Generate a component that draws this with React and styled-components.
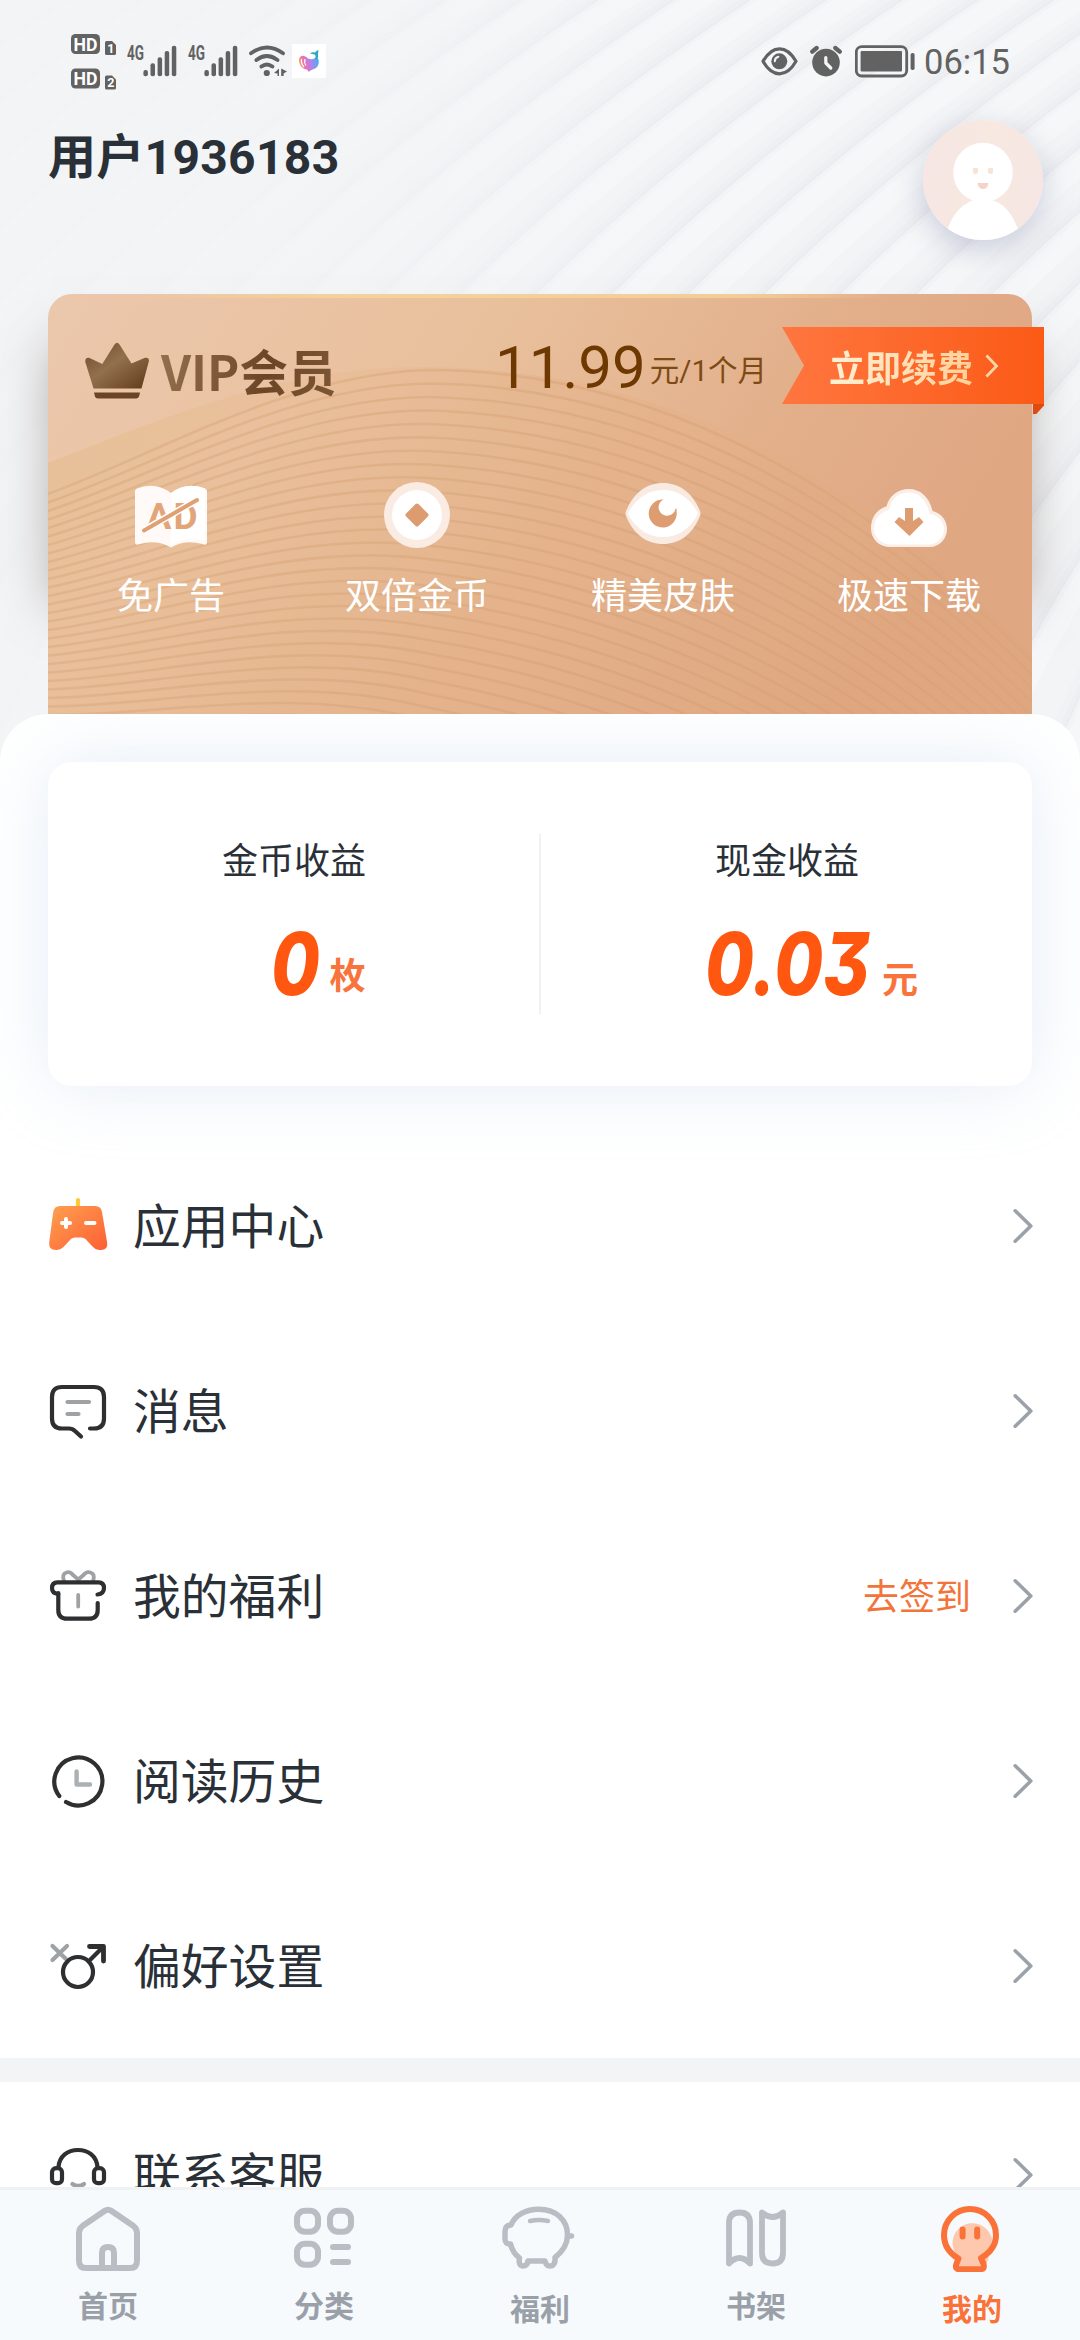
import React from 'react';
import styled, { createGlobalStyle, css } from 'styled-components';

const GlobalStyle = createGlobalStyle`
  * {
    box-sizing: border-box;
  }

  body {
    margin: 0;
    background: #fff;
    font-family: Roboto, 'Noto Sans CJK SC', sans-serif;
    color: #2a3037;
  }

  svg {
    display: block;
    flex: none;
  }
`;

const Page = styled.div`
  position: relative;
  display: flex;
  flex-direction: column;
  width: 1080px;
  height: 2340px;
  overflow: hidden;
  background: #f3f4f6;
`;

const Backdrop = styled.svg`
  position: absolute;
  top: 0;
  left: 0;
`;

/* ---------- status bar ---------- */

const StatusBar = styled.div`
  position: relative;
  display: flex;
  justify-content: space-between;
  height: 82px;
  padding: 34px 70px 0 71px;
`;

const StatusGroup = styled.div`
  display: flex;
  gap: ${({ $gap }) => $gap}px;
`;

const Clock = styled.span`
  margin-left: -3px;
  font-size: 34.5px;
  line-height: 57px;
  color: #626262;
`;

/* ---------- header ---------- */

const Header = styled.header`
  position: relative;
  display: flex;
  justify-content: space-between;
  height: 212px;
  padding: 38px 37px 0 48px;
`;

const UserName = styled.h1`
  margin: 0;
  font-size: 48px;
  line-height: 76px;
  letter-spacing: 0.3px;
  font-weight: 700;
`;

const Avatar = styled.div`
  width: 120px;
  height: 120px;
  border-radius: 50%;
  overflow: hidden;
  background: linear-gradient(100deg, #f7e6e4, #f7e8e0 50%, #f6e6e4);
  box-shadow: 0 10px 30px rgba(120, 130, 165, 0.35);
`;

/* ---------- vip card ---------- */

const VipCard = styled.section`
  position: relative;
  height: 420px;
  margin: 0 48px;

  &:before {
    content: '';
    position: absolute;
    inset: 60px 14px 120px;
    box-shadow: 0 0 46px 10px rgba(110, 100, 95, 0.5);
  }
`;

const VipArt = styled.svg`
  position: absolute;
  top: 0;
  left: 0;
  border-radius: 24px 24px 0 0;
`;

const VipHead = styled.div`
  position: relative;
  display: flex;
  align-items: center;
  height: 110px;
  padding: 33px 0 0 37px;

  > svg {
    margin-top: 11px;
  }
`;

const VipTitle = styled.h2`
  margin: 9px 0 0 12px;
  font-family: 'Noto Sans CJK SC', sans-serif;
  font-size: 48.5px;
  line-height: 60px;
  font-weight: 700;
  background: linear-gradient(100deg, #94704e, #6c4526 60%, #7d5735);
  background-clip: text;
  color: transparent;
`;

const Price = styled.div`
  display: flex;
  align-items: baseline;
  margin: 4px 15px 0 auto;
  font-size: 60px;
  line-height: 77px;
  color: #6e3900;

  small {
    margin-left: 4px;
    font-size: 29.5px;
    line-height: 1;
    color: #7d4a14;
    transform: translateY(-7px);
  }
`;

const Ribbon = styled.div`
  position: relative;
  display: flex;
  align-items: center;
  gap: 12px;
  width: 262px;
  height: 77px;
  margin-right: -12px;
  padding-left: 47px;
  background: linear-gradient(90deg, #ff763f, #fb5a16);
  clip-path: polygon(0 0, 100% 0, 100% 100%, 0 100%, 22px 50%);
  font-size: 36px;
  font-weight: 700;

  span {
    background: linear-gradient(90deg, #fff0d4, #ffd09a);
    background-clip: text;
    color: transparent;
  }
`;

const RibbonFold = styled.div`
  position: absolute;
  top: 110px;
  right: -12px;
  width: 11px;
  height: 10px;
  background: #e2490c;
  clip-path: polygon(0 0, 100% 0, 100% 15%, 30% 100%, 0 100%);
`;

const Features = styled.div`
  position: relative;
  display: grid;
  grid-template-columns: repeat(4, 1fr);
  padding-top: 78px;
`;

const Feature = styled.div`
  display: flex;
  flex-direction: column;
  align-items: center;
  gap: 24px;
  font-size: 36px;
  line-height: 50px;
  color: #fff;
`;

/* ---------- white sheet ---------- */

const Sheet = styled.main`
  position: relative;
  height: 1473px;
  padding-top: 48px;
  overflow: hidden;
  border-radius: 48px 48px 0 0;
  background: #fff;
`;

const Earnings = styled.section`
  display: flex;
  align-items: center;
  height: 324px;
  margin: 0 48px 47px;
  border-radius: 24px;
  background: #fff;
  box-shadow: 0 0 70px rgba(170, 195, 225, 0.3);
`;

const Divider = styled.div`
  width: 2px;
  height: 180px;
  background: #f0f1f3;
`;

const Earning = styled.div`
  flex: 1;
  height: 180px;
  padding: 2px 0 0 1px;
  text-align: center;
  font-size: 36px;
  line-height: 52px;
`;

const Amount = styled.div`
  display: flex;
  justify-content: center;
  align-items: baseline;
  padding-left: 49px;
  margin-top: 24px;
`;

const Digits = styled.span`
  width: ${({ $width }) => $width}px;
  text-align: left;
  font-family: Inter, Roboto, sans-serif;
  font-feature-settings: 'cv09' 1;
  font-size: 86px;
  font-style: italic;
  font-weight: 800;
  line-height: 104px;
  color: #ff5610;
  white-space: nowrap;
  transform: scaleX(0.82);
  transform-origin: left;
`;

const Unit = styled.span`
  font-weight: 700;
  color: #f9743c;
  transform: translateY(${({ $lift }) => -$lift}px);
`;

const Row = styled.div`
  display: flex;
  align-items: center;
  height: 185px;
  padding: 0 47px 0 48px;
`;

const RowLabel = styled.span`
  flex: 1;
  margin: 4px 0 0 25px;
  font-size: 47.8px;
  line-height: 70px;
`;

const RowHint = styled.span`
  margin: 4px 42px 0 0;
  font-size: 36px;
  line-height: 52px;
  color: #f3743a;
`;

const Separator = styled.div`
  height: 24px;
  background: #f3f4f6;
`;

/* ---------- tab bar ---------- */

const TabBar = styled.nav`
  position: relative;
  display: grid;
  grid-template-columns: repeat(5, 1fr);
  height: 153px;
  padding-top: 16px;
  border-top: 3px solid #eff1f3;
  background: #f6fafd;
`;

const Tab = styled.div`
  display: flex;
  flex-direction: column;
  align-items: center;
  font-size: 30px;
  line-height: 40px;
  font-weight: 700;
  color: #9aa0a8;

  span {
    margin-top: ${({ $low }) => ($low ? 18 : 15)}px;
  }

  ${({ $active }) =>
    $active &&
    css`
      color: #fa7238;
    `}
`;

/* ---------- drawings ---------- */

const waves = Array.from({ length: 26 }, (_, i) => i);

const Waves = () => (
  <Backdrop width="1080" height="780" viewBox="0 0 1080 780" fill="none">
    <defs>
      <linearGradient id="fade" x1="0" x2="1">
        <stop offset="0.2" stopColor="#f3f4f6" stopOpacity="0.85" />
        <stop offset="0.4" stopColor="#f3f4f6" stopOpacity="0.6" />
        <stop offset="0.65" stopColor="#f3f4f6" stopOpacity="0" />
      </linearGradient>
    </defs>
    {waves.map(i => {
      const x = -780 + i * 76;
      const d = `M${x} 1100C${x + 40} 700 ${x + 260} 330 ${x + 800} -20`;
      return (
        <g key={i}>
          <path d={d} stroke="#f8f9f9" strokeOpacity="0.5" strokeWidth="20" transform="translate(12 9)" />
          <path d={d} stroke="#e6e9ec" strokeOpacity="0.15" strokeWidth="13" transform="translate(-5 -4)" />
          <path d={d} stroke="#e4e7ea" strokeOpacity="0.2" strokeWidth="6" transform="translate(-2 -2)" />
          <path d={d} stroke="#e1e4e8" strokeOpacity="0.3" strokeWidth="2" />
        </g>
      );
    })}
    <rect width="1080" height="780" fill="url(#fade)" />
  </Backdrop>
);

const ridges = Array.from({ length: 32 }, (_, i) => i);

const VipBackground = () => (
  <VipArt width="984" height="420" viewBox="0 0 984 420" fill="none">
    <defs>
      <linearGradient id="skin" x1="0" y1="0" x2="1" y2="0.25">
        <stop offset="0" stopColor="#ebc7ac" />
        <stop offset="0.45" stopColor="#e9c09c" />
        <stop offset="0.75" stopColor="#e3b08c" />
        <stop offset="1" stopColor="#e0a783" />
      </linearGradient>
      <linearGradient id="dune" x1="0" y1="0" x2="1" y2="0.3">
        <stop offset="0" stopColor="#e6bf97" />
        <stop offset="0.25" stopColor="#e9c09b" />
        <stop offset="0.6" stopColor="#e4b38c" />
        <stop offset="1" stopColor="#dfa780" />
      </linearGradient>
      <linearGradient id="edge">
        <stop offset="0.08" stopColor="#f5d29c" stopOpacity="0" />
        <stop offset="0.3" stopColor="#f5d29c" />
        <stop offset="0.7" stopColor="#f3cd98" />
        <stop offset="0.85" stopColor="#f3cd98" stopOpacity="0" />
      </linearGradient>
      <linearGradient id="ridge" gradientUnits="userSpaceOnUse" x1="0" x2="984">
        <stop offset="0" stopColor="#d3a070" stopOpacity="0.36" />
        <stop offset="0.6" stopColor="#cf9668" stopOpacity="0.3" />
        <stop offset="1" stopColor="#cf9164" stopOpacity="0.12" />
      </linearGradient>
    </defs>
    <rect width="984" height="420" fill="url(#skin)" />
    <path d="M0 169C130 118 240 73 372 73C580 73 780 150 984 359V420H0Z" fill="url(#dune)" />
    {ridges.map(i => {
      const left = 200 + i * 8.5;
      const mid = 76 + i * 13.5;
      const tilt = i * 1.6;
      return (
        <path
          key={i}
          d={`M0 ${left}C110 ${left - 40 + tilt} 240 ${mid + 4 - tilt} 380 ${mid}C580 ${mid + tilt} 790 ${mid + 92 + tilt} 984 ${mid + 292}`}
          stroke="url(#ridge)"
          strokeWidth="2.6"
        />
      );
    })}
    <rect width="984" height="4" fill="url(#edge)" />
  </VipArt>
);

const HdIcon = () => (
  <svg width="46" height="56" viewBox="0 0 46 56" fontFamily="Roboto" fontWeight="700" fill="#fff">
    {[0, 34.5].map((y, i) => (
      <g key={y} transform={`translate(0 ${y})`}>
        <rect width="29" height="20" rx="4.5" fill="#626262" />
        <text x="2.5" y="16.5" fontSize="18" textLength="24" lengthAdjust="spacingAndGlyphs">
          HD
        </text>
        <path d="M34 8.5Q34 7 35.5 7H41L45 11V19.5Q45 21 43.5 21H35.5Q34 21 34 19.5Z" fill="#626262" />
        <text x="36.3" y="18.8" fontSize="12.5">
          {i + 1}
        </text>
      </g>
    ))}
  </svg>
);

const SignalIcon = () => (
  <svg width="51" height="56" viewBox="0 0 51 56" fill="#626262">
    <text y="26" fontFamily="Roboto" fontWeight="700" fontSize="19.5" textLength="17" lengthAdjust="spacingAndGlyphs">
      4G
    </text>
    {[36, 29.3, 23.3, 17, 11.7].map((y, i) => (
      <rect key={y} x={16.4 + i * 7.1} y={y} width="4.5" height={42.3 - y} rx="2" />
    ))}
  </svg>
);

const WifiIcon = () => (
  <svg width="33" height="56" viewBox="0 0 33 56" overflow="visible" fill="none" stroke="#626262" strokeWidth="3.8" strokeLinecap="round">
    <path d="M2 19.3Q17.8 7.6 34 19.3M7.4 26Q17.8 18 28.5 26M12.4 32.6Q17.8 28.4 23.4 32.6" />
    <circle cx="17.8" cy="39" r="3.1" fill="#626262" stroke="none" />
    <path d="M30 34.5V42H28.5V39.6L25 39ZM32.2 34.5L38 37.6L34.6 39.6V42H32.2Z" fill="#626262" stroke="none" />
  </svg>
);

const WhaleIcon = () => (
  <svg width="34" height="56" viewBox="0 0 34 56" fill="none">
    <defs>
      <linearGradient id="whale" x1="0" y1="0.6" x2="1" y2="0.4">
        <stop offset="0" stopColor="#f3b04e" />
        <stop offset="0.3" stopColor="#ea6fbd" />
        <stop offset="0.65" stopColor="#a588ee" />
        <stop offset="1" stopColor="#45aef0" />
      </linearGradient>
    </defs>
    <rect y="10" width="34" height="34" fill="#fff" />
    <path d="M7 26C7 21 12 20 16 24.5C20 26 23 25 24 22.5C27 24 28 29 25 33C22 36 19 35 17 38L15 35.5C10 35 7 31 7 26Z" fill="url(#whale)" />
    <path d="M23.5 24.5Q24 21 22.5 20.5L18 19.5Q20 17.8 23 18.5Q24 16.5 26.5 16L26 20Q27 23 24.5 26Z" fill="#2ba6c4" />
    <path d="M9.5 25Q9 30 12 33M13 25Q12 29 14 31.5" stroke="#fff" strokeWidth="1.1" />
  </svg>
);

const EyeIcon = () => (
  <svg width="37" height="56" viewBox="0 0 37 56" fill="none">
    <path
      d="M2 27.3C7 18.5 13 14.8 18.5 14.8S30 18.5 35 27.3C30 36.1 24 39.8 18.5 39.8S7 36.1 2 27.3Z"
      stroke="#626262"
      strokeWidth="3.2"
      strokeLinejoin="round"
    />
    <circle cx="18.3" cy="27.3" r="8" fill="#626262" />
    <path d="M13.8 27.3Q14 23.5 17.4 22.8" stroke="#f3f4f6" strokeWidth="2" strokeLinecap="round" />
  </svg>
);

const AlarmIcon = () => (
  <svg width="33" height="56" viewBox="0 0 33 56" fill="none" strokeLinecap="round">
    <circle cx="16" cy="28.6" r="13.8" fill="#626262" />
    <path d="M2.3 17.6L6.6 14M25.4 14L29.7 17.6" stroke="#626262" strokeWidth="4.4" />
    <path d="M15.8 23.5V29L20.8 34" stroke="#f5f6f7" strokeWidth="3.2" strokeLinejoin="round" />
  </svg>
);

const BatteryIcon = () => (
  <svg width="60" height="56" viewBox="0 0 60 56" fill="none">
    <rect x="1.3" y="12.6" width="50.4" height="29.4" rx="5.5" stroke="#626262" strokeWidth="2.8" />
    <rect x="5.6" y="17" width="41.4" height="20.4" rx="1" fill="#626262" />
    <rect x="55.6" y="19" width="4" height="17" rx="1.8" fill="#626262" />
  </svg>
);

const AvatarFace = () => (
  <svg width="120" height="120" viewBox="0 0 120 120">
    <circle cx="60" cy="52.5" r="29.8" fill="#fff" />
    <path d="M23 120V113C30 92 42 79 60 79S90 92 96 113V120Z" fill="#fff" />
    <path d="M50 48h5v3a2.5 3 0 0 1-5 0ZM65 48h5v3a2.5 3 0 0 1-5 0Z" fill="#f8e3d6" />
    <path d="M54.5 63H65.5Q64.5 69 60 69T54.5 63Z" fill="#f6d3c8" />
  </svg>
);

const Crown = () => (
  <svg width="64" height="58" viewBox="0 0 64 58">
    <defs>
      <linearGradient id="crown" x1="0" y1="0" x2="1" y2="1">
        <stop offset="0" stopColor="#6d4929" />
        <stop offset="0.45" stopColor="#93704d" />
        <stop offset="1" stopColor="#5f3a18" />
      </linearGradient>
    </defs>
    <path
      d="M29.5 2.5Q32 -1 34.5 2.5L46.5 21.5L60 15.8Q64.5 15 63.8 19.5L56.5 46.5H8.5L0.3 20Q0 15 4 15.8L17.3 22Z"
      fill="url(#crown)"
    />
    <path d="M9 50.5H55L54 54.5Q53.4 56.5 51 56.5H13Q10.5 56.5 10 54.5Z" fill="#6a4424" />
  </svg>
);

const BookFeature = () => (
  <svg width="76" height="66" viewBox="0 0 76 66" fill="none">
    <path
      d="M2 9Q2 7.5 4 6.5Q22 -0.5 38 11Q54 -0.5 72 6.5Q74 7.5 74 9V60Q74 64 69.5 62Q52 57 38 65.5Q24 57 6.5 62Q2 64 2 60Z"
      fill="#fffaf7"
    />
    <path d="M38 11Q54 -0.5 72 6.5V58Q52 53 38 64Z" fill="#fff" />
    <text x="13.5" y="46.5" fontFamily="Roboto" fontWeight="700" fontSize="37" fill="#e2a57a" textLength="51">
      AD
    </text>
    <path d="M10.5 48.5L64 18" stroke="#fff" strokeWidth="7" />
    <path d="M11 48.5L64 18" stroke="#dfa073" strokeWidth="4" strokeLinecap="round" />
  </svg>
);

const CoinFeature = () => (
  <svg width="76" height="66" viewBox="0 0 76 66">
    <circle cx="38" cy="33" r="33" fill="#faece2" />
    <circle cx="38" cy="33" r="25" fill="#fff" />
    <rect x="29.3" y="24.3" width="17.4" height="17.4" rx="2" fill="#dd9c6f" transform="rotate(45 38 33)" />
  </svg>
);

const EyeFeature = () => (
  <svg width="76" height="66" viewBox="0 0 76 66">
    <path
      d="M1 34Q0 31.5 1 29C9 10 22 1 38 1S67 10 75 29Q76 31.5 75 34C67 53 54 62 38 62S9 53 1 34Z"
      fill="#f9ebe2"
    />
    <path
      d="M3.5 33Q3 31.5 3.5 30C12 15 24 8 38 8S64 15 72.5 30Q73 31.5 72.5 33C64 48 52 55 38 55S12 48 3.5 33Z"
      fill="#fff"
    />
    <path d="M38.5 17.5A14 14 0 1 0 51.5 29Q52 26 50.5 26.5A8.5 8.5 0 1 1 38.5 17.5Z" fill="#dd9d70" />
  </svg>
);

const CloudFeature = () => (
  <svg width="76" height="66" viewBox="0 0 76 66">
    <path
      d="M19 65C8 65 0 57 0 46.5C0 35.5 6 27 15.5 24.5C18 14 27 7 38 7S58.5 15 61.5 29C70 31 76 38 76 47C76 57 68.5 65 58.5 65Z"
      fill="#fbeee6"
    />
    <path
      d="M20 62.5C10.5 62.5 3 55.5 3 46.5C3 37 9 30 18 28C20 16.5 28 10.5 38 10.5S56 18 58.5 32C67 33 73 39.5 73 47C73 56 66.5 62.5 57.5 62.5Z"
      fill="#fff"
    />
    <path d="M34 26H42V39L48 35L52.5 40L38.5 54L23.5 40L28 35L34 39Z" fill="#dd9d70" />
  </svg>
);

const Chevron = ({ color = '#9aa1a9' }) => (
  <svg width="20" height="36" viewBox="0 0 20 36" fill="none" stroke={color} strokeWidth="3.6" strokeLinecap="round" strokeLinejoin="round">
    <path d="M2.2 2.8L17.8 18L2.2 33.2" />
  </svg>
);

const RowIcon = ({ children }) => (
  <svg width="60" height="60" viewBox="0 0 60 60" fill="none" stroke="#2d2f31" strokeWidth="4.2" strokeLinecap="round" strokeLinejoin="round">
    {children}
  </svg>
);

const GRAY = '#9fa2a5';

const GameIcon = () => (
  <RowIcon>
    <defs>
      <linearGradient id="pad" x1="0" y1="0" x2="1" y2="1">
        <stop offset="0" stopColor="#ffa050" />
        <stop offset="1" stopColor="#fc5f34" />
      </linearGradient>
    </defs>
    <path d="M30 4.2V14" stroke="#fdca35" />
    <path
      d="M12 10H47Q53 10 54 16L59.2 47Q60 54 53 54H51Q47.5 54 45 51L37.5 43Q36 41.5 33.5 41.5H27Q24.5 41.5 23 43L15.5 51Q12.5 54 9 54H8Q0.3 54 1.2 46.5L5.2 16Q6.2 10 12 10Z"
      fill="url(#pad)"
      stroke="none"
    />
    <path d="M14 27H22M18 23V31M38 27H46.5" stroke="#fff" strokeWidth="4" />
  </RowIcon>
);

const MessageIcon = () => (
  <RowIcon>
    <path d="M42 47.5H46Q56 47.5 56 37.5V16Q56 6 46 6H14Q4 6 4 16V37.5Q4 47.5 14 47.5H21Q24.5 47.5 27 50L33 55.5" />
    <path d="M19.5 21H41M19.5 33H30.5" stroke={GRAY} />
  </RowIcon>
);

const GiftIcon = () => (
  <RowIcon>
    <path d="M16 15Q13.5 8 18.5 6.5Q22 5 25 9L30.3 13.5L35.5 9Q38.5 5 42.5 6.5Q47.5 8 45 15M30.2 29V40.5" stroke={GRAY} strokeWidth="3.8" />
    <path d="M10.3 27V44Q10.3 52.7 19 52.7H41Q49.7 52.7 49.7 44V37" />
    <path d="M10.3 28Q4 27.5 4 22T9.5 16.3H50.5Q56 16.3 56 22T49.5 28.5" />
  </RowIcon>
);

const HistoryIcon = () => (
  <RowIcon>
    <path d="M11.3 45A24 24 0 1 1 18 51" />
    <path d="M28.6 20.5V33.5H42" stroke="#abb0b3" strokeWidth="4.4" />
  </RowIcon>
);

const GenderIcon = () => (
  <RowIcon>
    <path d="M4.5 10L19 24M4.5 24L19 10" stroke={GRAY} />
    <circle cx="30" cy="36" r="15" />
    <path d="M41 25L54 12" />
    <path d="M41.5 10.5H55.5V25" strokeWidth="4.8" />
  </RowIcon>
);

const HeadsetIcon = () => (
  <RowIcon>
    <path d="M10.5 22C11.5 11 19.5 5 30 5S48.5 11 49.5 22" />
    <rect x="4" y="23.2" width="10" height="15" rx="4" />
    <rect x="46" y="23.2" width="10" height="15" rx="4" />
    <path d="M24.5 39Q30.3 43 36 39" stroke={GRAY} />
  </RowIcon>
);

const TabIcon = ({ children, color = '#b9bec4', width = 6 }) => (
  <svg width="76" height="66" viewBox="-2 0 76 66" fill="none" stroke={color} strokeWidth={width} strokeLinecap="round" strokeLinejoin="round">
    {children}
  </svg>
);

const HomeTab = () => (
  <TabIcon>
    <path d="M32.8 4.8Q36 2.6 39.2 4.8L61.5 20Q65 22.8 65 27V55Q65 62 58 62H14Q7 62 7 55V27Q7 22.8 10.5 20Z" />
    <path d="M30 61V47Q30 41 36 41T42 47V61" />
  </TabIcon>
);

const CategoryTab = () => (
  <TabIcon>
    <rect x="9" y="4.8" width="21" height="21" rx="8" />
    <rect x="42" y="4.8" width="21" height="21" rx="8" />
    <rect x="9" y="37.8" width="21" height="21" rx="8" />
    <path d="M45 41H60M45 56H60" />
  </TabIcon>
);

const PigTab = () => (
  <TabIcon width={5.5}>
    <path d="M7 19C11 9 22 3.2 35 3.2C52 3.2 63.5 14 63.5 29C63.5 39 58 46 51 51.5C51.5 57 49.5 60 46 60S42 58 41 55H24C23.5 58 22 60 19 60S14.5 57 15.5 52C11 49 8 44 6.5 38C3 38.5 1 36.5 1 33V25C1 21.5 3 19 7 19Z" />
    <path d="M65 30H67.5" />
    <path d="M26 15Q35 13 44 15" strokeWidth="4.5" />
  </TabIcon>
);

const ShelfTab = () => (
  <TabIcon width={5.8}>
    <path d="M9 57.5V17Q9 6.5 19.5 6.5T30 17V57.5Q19.5 46.5 9 57.5Z" />
    <path d="M42 6.5V47Q42 57.5 52.5 57.5T63 47V6.5Q52.5 15.5 42 6.5Z" />
  </TabIcon>
);

const MineTab = () => (
  <TabIcon color="#fa7238">
    <path d="M16.5 36A20 20 0 0 1 56 33Q54 48 51 57L46 62H21L23 51Q16.5 46 16.5 36Z" fill="#fdc8ae" stroke="none" />
    <path d="M22.5 52.5C13 47 8 39.5 8 29A26 26 0 0 1 60 29C60 39 54.5 46.5 45 52L47.5 58Q49 63.2 44.5 63.2H23Q19 63.2 20.2 58.5Z" />
    <path d="M26.6 23.5V30.5M41.2 23.5V30.5" />
  </TabIcon>
);

const features = [
  { label: '免广告', Icon: BookFeature },
  { label: '双倍金币', Icon: CoinFeature },
  { label: '精美皮肤', Icon: EyeFeature },
  { label: '极速下载', Icon: CloudFeature },
];

const rows = [
  { label: '应用中心', Icon: GameIcon },
  { label: '消息', Icon: MessageIcon },
  { label: '我的福利', Icon: GiftIcon, hint: '去签到' },
  { label: '阅读历史', Icon: HistoryIcon },
  { label: '偏好设置', Icon: GenderIcon },
];

const tabs = [
  { label: '首页', Icon: HomeTab },
  { label: '分类', Icon: CategoryTab },
  { label: '福利', Icon: PigTab, low: true },
  { label: '书架', Icon: ShelfTab },
  { label: '我的', Icon: MineTab, low: true, active: true },
];

const MenuRow = ({ label, Icon, hint }) => (
  <Row>
    <Icon />
    <RowLabel>{label}</RowLabel>
    {hint && <RowHint>{hint}</RowHint>}
    <Chevron />
  </Row>
);

const App = () => (
  <>
    <GlobalStyle />
    <Page>
      <Waves />

      <StatusBar>
        <StatusGroup $gap={10}>
          <HdIcon />
          <SignalIcon />
          <SignalIcon />
          <WifiIcon />
          <WhaleIcon />
        </StatusGroup>
        <StatusGroup $gap={12}>
          <EyeIcon />
          <AlarmIcon />
          <BatteryIcon />
          <Clock>06:15</Clock>
        </StatusGroup>
      </StatusBar>

      <Header>
        <UserName>用户1936183</UserName>
        <Avatar>
          <AvatarFace />
        </Avatar>
      </Header>

      <VipCard>
        <VipBackground />
        <VipHead>
          <Crown />
          <VipTitle>VIP会员</VipTitle>
          <Price>
            11.99<small>元/1个月</small>
          </Price>
          <Ribbon>
            <span>立即续费</span>
            <svg width="14" height="24" viewBox="0 0 14 24" fill="none" stroke="#ffd7a6" strokeWidth="2.8">
              <path d="M1.5 1.5L11.5 12L1.5 22.5" />
            </svg>
          </Ribbon>
          <RibbonFold />
        </VipHead>
        <Features>
          {features.map(({ label, Icon }) => (
            <Feature key={label}>
              <Icon />
              {label}
            </Feature>
          ))}
        </Features>
      </VipCard>

      <Sheet>
        <Earnings>
          <Earning>
            金币收益
            <Amount>
              <Digits $width={58}>0</Digits>
              <Unit $lift={6}>枚</Unit>
            </Amount>
          </Earning>
          <Divider />
          <Earning>
            现金收益
            <Amount>
              <Digits $width={177}>0.03</Digits>
              <Unit $lift={2}>元</Unit>
            </Amount>
          </Earning>
        </Earnings>

        {rows.map(row => (
          <MenuRow key={row.label} {...row} />
        ))}
        <Separator />
        <MenuRow label="联系客服" Icon={HeadsetIcon} />
      </Sheet>

      <TabBar>
        {tabs.map(({ label, Icon, low, active }) => (
          <Tab key={label} $low={low} $active={active}>
            <Icon />
            <span>{label}</span>
          </Tab>
        ))}
      </TabBar>
    </Page>
  </>
);

export default App;
